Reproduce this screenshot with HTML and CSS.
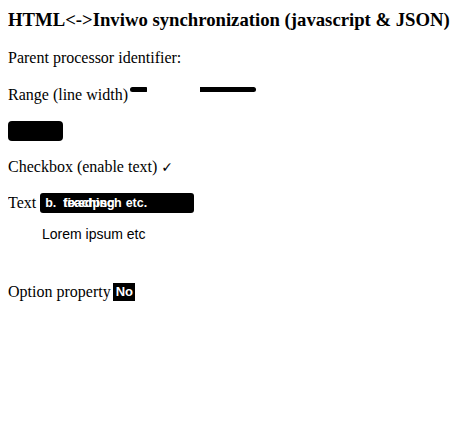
FILE: index.html
```html
<!DOCTYPE html>
<html>
<head>
<meta charset="utf-8">
<link rel="stylesheet" href="styles.css">
</head>
<body>
<h3 class="title">HTML&lt;-&gt;Inviwo synchronization (javascript &amp; JSON)</h3>
<p class="row">Parent processor identifier:</p>
<div class="row range-row">
  <span>Range (line width)</span>
  <span class="range">
    <span class="range-fill"></span>
    <span class="range-gap"></span>
    <span class="range-rest"></span>
  </span>
</div>
<div class="row btn-row"><span class="button"></span></div>
<div class="row check-row">Checkbox (enable text) <span class="check">✓</span></div>
<div class="row text-row">
  <span>Text</span>
  <span class="textbox">
    <span class="tb-b">b.</span>
    <span class="overlap"><span>teaching</span><span>fixedpsch</span></span>
    <span class="tb-etc">etc.</span>
  </span>
</div>
<div class="row lorem">Lorem ipsum etc</div>
<div class="row option-row">
  <span>Option property</span>
  <span class="select">No</span>
</div>
</body>
</html>
```
FILE: styles.css
```css
html, body {
  background: #ffffff;
}
body {
  margin: 8px;
  font-family: "Liberation Serif", "Times New Roman", serif;
  font-size: 16px;
  color: #000000;
}
.title {
  font-size: 18.72px;
  font-weight: bold;
  margin: 1px 0 0;
  line-height: 21px;
}
.row {
  margin: 0;
  line-height: 18px;
}
p.row {
  margin-top: 19px;
}
.range-row {
  margin-top: 19px;
  display: flex;
  align-items: center;
  gap: 2px;
}
.range {
  display: flex;
  align-items: center;
  height: 16px;
  margin-top: -12px;
}
.range-fill {
  width: 17px;
  height: 5px;
  background: #000;
  border-radius: 3px 1px 1px 3px;
}
.range-gap {
  width: 53px;
}
.range-rest {
  width: 56px;
  height: 5px;
  background: #000;
  border-radius: 0 3px 3px 0;
}
.btn-row {
  margin-top: 17px;
  display: flex;
}
.button {
  width: 55px;
  height: 20px;
  background: #000;
  border-radius: 4px;
}
.check {
  font-family: "DejaVu Sans", sans-serif;
  font-size: 14px;
}
.check-row {
  margin-top: 17px;
}
.text-row {
  margin-top: 17px;
  display: flex;
  align-items: center;
  gap: 4px;
}
.textbox {
  display: flex;
  align-items: center;
  width: 154px;
  height: 20px;
  background: #000;
  border-radius: 3px;
  color: #fff;
  font-family: "Liberation Sans", Arial, sans-serif;
  font-size: 12.5px;
  font-weight: bold;
  padding-left: 5px;
  box-sizing: border-box;
  gap: 7px;
}
.overlap {
  display: inline-grid;
}
.overlap > span {
  grid-area: 1 / 1;
}
.tb-etc {
  margin-left: -3px;
}
.lorem {
  margin-top: 12px;
  margin-left: 34px;
  font-family: "Liberation Sans", Arial, sans-serif;
  font-size: 14px;
  font-weight: 300;
}
.option-row {
  margin-top: 40px;
  display: flex;
  align-items: center;
  gap: 2px;
}
.select {
  background: #000;
  color: #fff;
  font-family: "Liberation Sans", Arial, sans-serif;
  font-weight: bold;
  font-size: 13px;
  width: 22px;
  height: 18px;
  line-height: 18px;
  padding-left: 3px;
  box-sizing: border-box;
  overflow: hidden;
  white-space: nowrap;
}
```
